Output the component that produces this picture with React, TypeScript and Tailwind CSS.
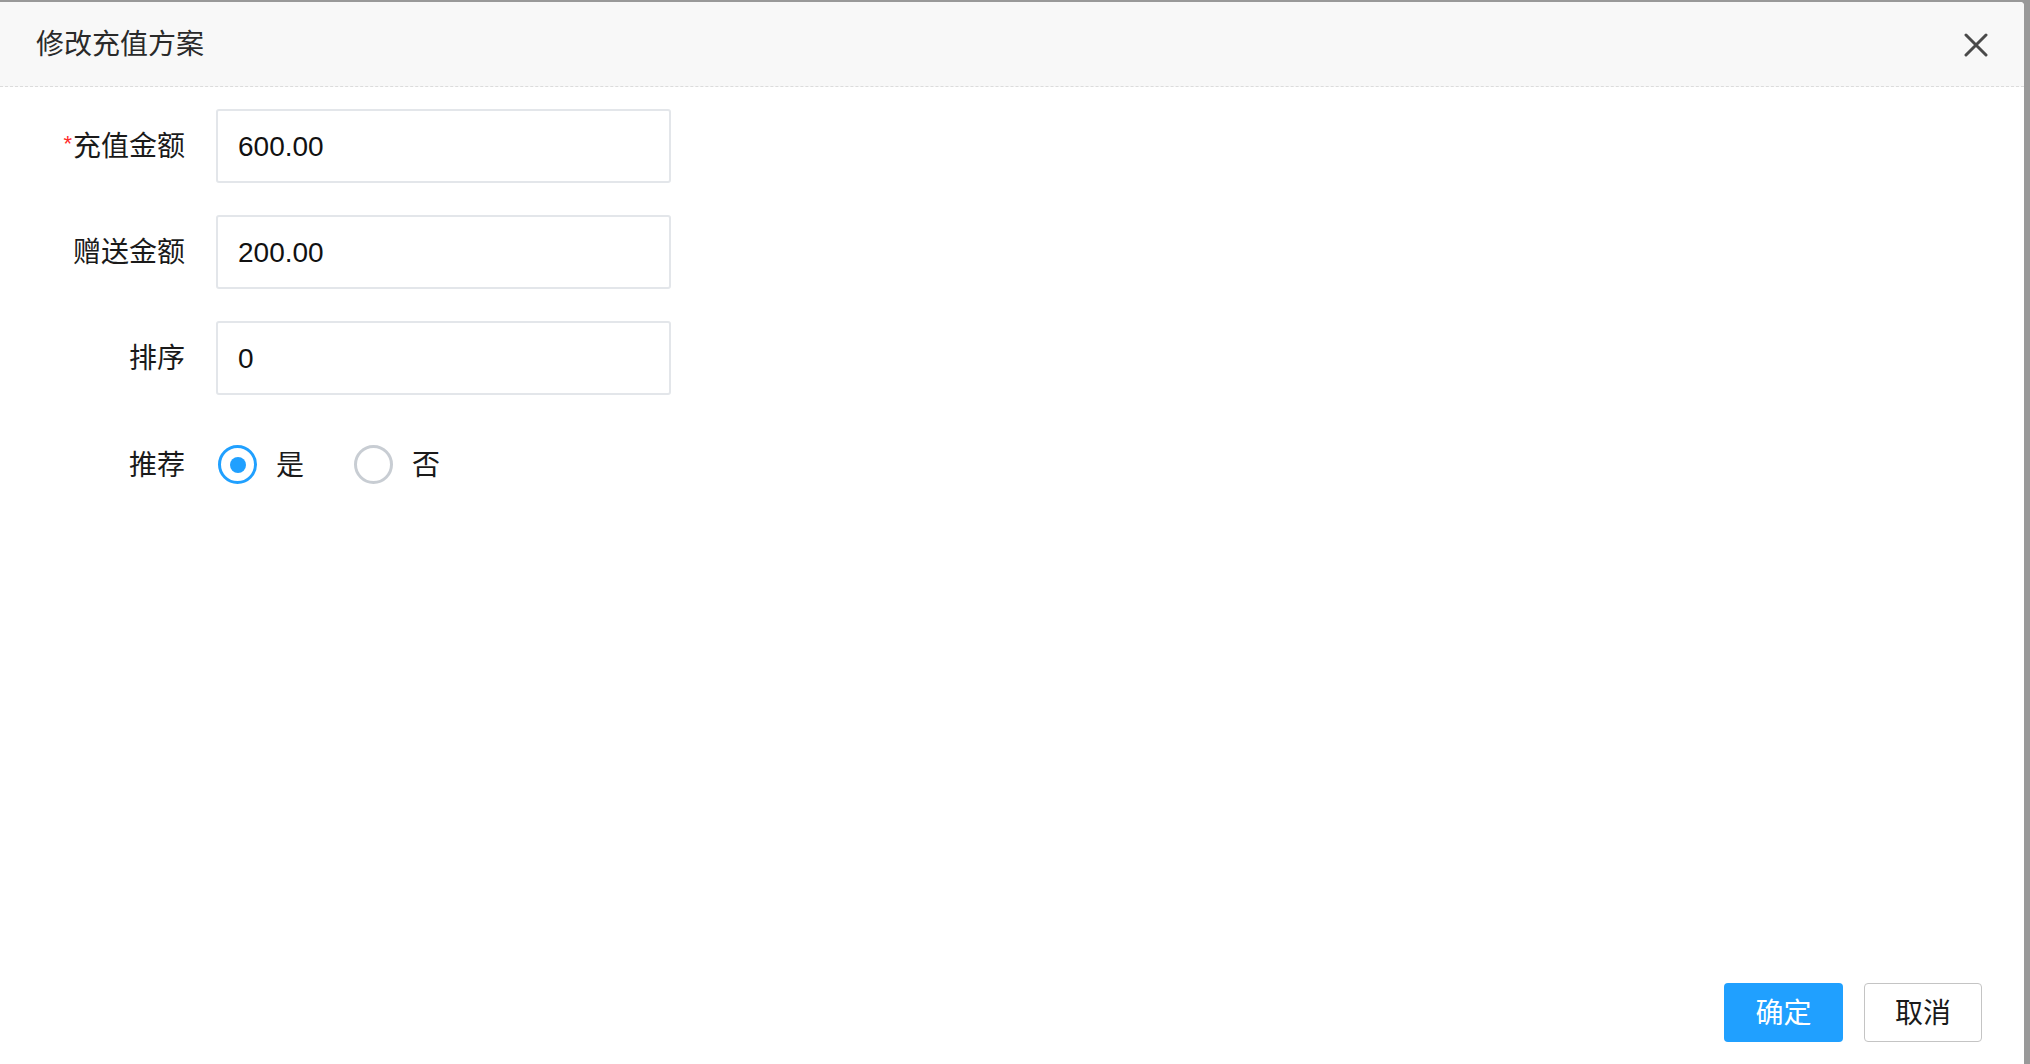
import { useState } from 'react';

const FONT = 'font-["Liberation_Sans","Noto_Sans_CJK_SC",sans-serif]';

function Field({ label, value, required }: { label: string; value: string; required?: boolean }) {
  return (
    <div className="flex items-center h-[74px]">
      <label className="w-[185px] pt-[2px] text-right text-[28px] leading-none text-[#1a1a1a]">
        {required && <span className="text-[#ff2a2a] text-[22px] align-top mr-[1px]">*</span>}
        {label}
      </label>
      <input
        defaultValue={value}
        className="ml-[31px] w-[455px] h-[74px] px-[20px] pt-[2px] border-2 border-[#e3e6ea] rounded-[3px] text-[28px] text-[#111] outline-none"
      />
    </div>
  );
}

function Radio({ checked, label, onClick }: { checked: boolean; label: string; onClick: () => void }) {
  return (
    <button type="button" onClick={onClick} className="flex items-center">
      <span
        className={
          checked
            ? 'w-[39px] h-[39px] rounded-full border-[3px] border-[#20a0ff] flex items-center justify-center'
            : 'w-[39px] h-[39px] rounded-full border-[3px] border-[#c8cdd3] flex items-center justify-center'
        }
      >
        {checked && <span className="w-[16px] h-[16px] rounded-full bg-[#20a0ff]" />}
      </span>
      <span className="ml-[19px] pt-[2px] text-[28px] leading-none text-[#1a1a1a]">{label}</span>
    </button>
  );
}

export default function App() {
  const [recommend, setRecommend] = useState(true);

  return (
    <div className={`${FONT} h-screen bg-[#999] pt-[2px] pr-[6px] overflow-hidden`}>
      <div className="h-full bg-white rounded-tr-[4px] flex flex-col">
        <div className="h-[85px] shrink-0 bg-[#f8f8f8] border-b border-dashed border-[#dcdcdc] rounded-tr-[4px] flex items-center justify-between pl-[36px] pr-[36px]">
          <h1 className="pt-[2px] text-[28px] leading-none text-[#2a2a2a]">修改充值方案</h1>
          <button type="button" className="text-[#4a4a4a] pt-[2px]">
            <svg width="24" height="24" viewBox="0 0 24 24" fill="none" stroke="currentColor" strokeWidth="3" strokeLinecap="round">
              <path d="M2 2L22 22M22 2L2 22" />
            </svg>
          </button>
        </div>

        <div className="flex-1 pt-[22px] flex flex-col gap-[32px]">
          <Field label="充值金额" value="600.00" required />
          <Field label="赠送金额" value="200.00" />
          <Field label="排序" value="0" />
          <div className="flex items-center h-[74px] pt-[1px]">
            <label className="w-[185px] pt-[2px] text-right text-[28px] leading-none text-[#1a1a1a]">推荐</label>
            <div className="ml-[33px] flex items-center gap-[50px]">
              <Radio checked={recommend} label="是" onClick={() => setRecommend(true)} />
              <Radio checked={!recommend} label="否" onClick={() => setRecommend(false)} />
            </div>
          </div>
        </div>

        <div className="flex justify-end gap-[21px] pr-[42px] pb-[22px]">
          <button type="button" className="w-[119px] h-[59px] pt-[2px] rounded-[4px] bg-[#20a0ff] text-white text-[28px] leading-none">
            确定
          </button>
          <button type="button" className="w-[118px] h-[59px] pt-[2px] rounded-[4px] border border-[#c4c4c4] bg-white text-[#1a1a1a] text-[28px] leading-none">
            取消
          </button>
        </div>
      </div>
    </div>
  );
}
